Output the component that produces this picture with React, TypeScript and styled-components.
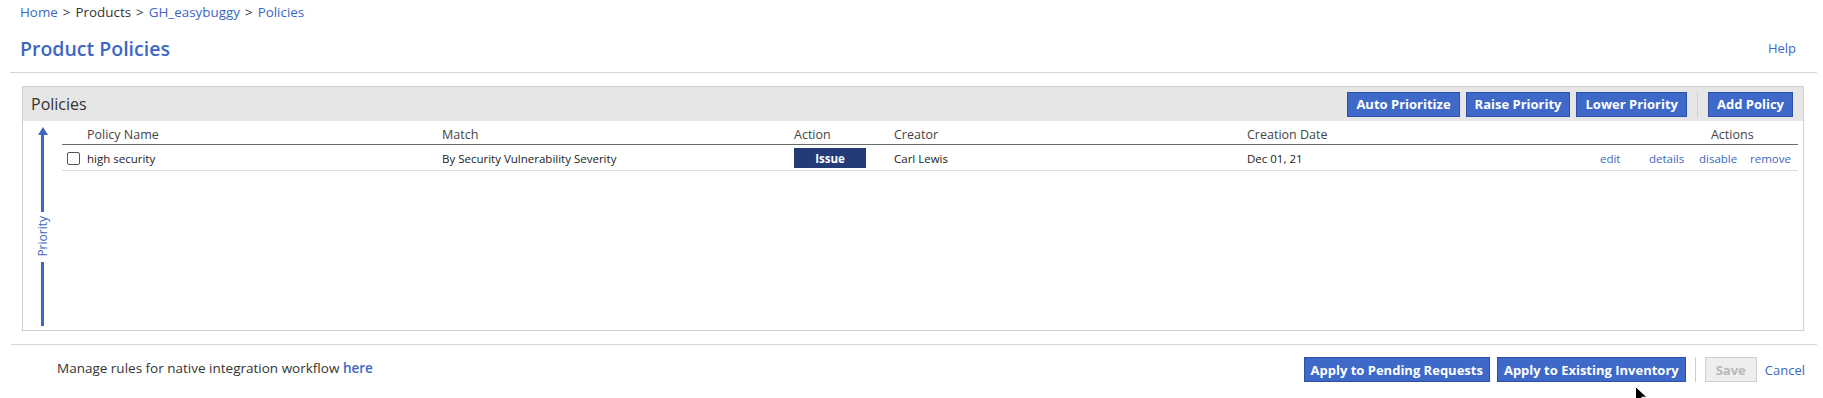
import React from "react";
import styled, { createGlobalStyle } from "styled-components";

const GlobalStyle = createGlobalStyle`
    body {
        margin: 0;
        background: #fff;
        font-family: "Open Sans", "Noto Sans", sans-serif;
        color: #333;
    }
    * { box-sizing: border-box; }
`;

const BLUE = "#3d67c4";

const Page = styled.div`
    position: relative;
    width: 1823px;
    height: 398px;
    padding: 0 6px 0 10px;
    overflow: hidden;
`;

const Breadcrumb = styled.div`
    height: 24px;
    line-height: 25px;
    padding-left: 10px;
    font-size: 13.4px;
    color: #333;
`;

const Crumb = styled.a<{ $current?: boolean }>`
    color: ${(p) => (p.$current ? "#333" : BLUE)};
    text-decoration: none;
`;

const Sep = styled.span`
    margin: 0 5px;
    color: #333;
`;

const TitleBar = styled.div`
    height: 49px;
    display: flex;
    align-items: center;
    justify-content: space-between;
    padding: 0 21px 0 10px;
    border-bottom: 1px solid #d6d6d6;
`;

const Title = styled.h1`
    margin: 0;
    font-size: 19.5px;
    font-weight: 600;
    color: ${BLUE};
`;

const HelpLink = styled.a`
    font-size: 13px;
    color: ${BLUE};
    text-decoration: none;
`;

const Panel = styled.section`
    margin: 13px 13px 0 12px;
    border: 1px solid #cfcfcf;
`;

const PanelHeader = styled.div`
    height: 34px;
    display: flex;
    align-items: center;
    padding: 0 10px 0 8px;
    background: #e6e6e6;
`;

const PanelTitle = styled.h2`
    margin: 0;
    flex: 1;
    font-size: 16px;
    font-weight: 400;
    color: #333;
`;

const ButtonGroup = styled.div`
    display: flex;
    align-items: center;
    gap: 6px;
`;

const Button = styled.button<{ $disabled?: boolean; $pad?: number }>`
    height: 25px;
    padding: 0 ${(p) => p.$pad ?? 8}px;
    font-family: "Open Sans", sans-serif;
    font-size: 13px;
    font-weight: 700;
    border: 1px solid ${(p) => (p.$disabled ? "#cfcfcf" : "#2b50a6")};
    background: ${(p) => (p.$disabled ? "#eeeeee" : "#3e69c9")};
    color: ${(p) => (p.$disabled ? "#b8b8b8" : "#fff")};
    border-radius: 0;
    cursor: pointer;
`;

const Divider = styled.span<{ $space?: number }>`
    width: 1px;
    height: 25px;
    margin: 0 ${(p) => p.$space ?? 4}px;
    background: #cfcfcf;
`;

const PanelBody = styled.div`
    height: 209px;
    display: flex;
`;

const PriorityCol = styled.div`
    width: 39px;
    display: flex;
    flex-direction: column;
    align-items: center;
    padding: 6px 0 4px;
    color: ${BLUE};
`;

const ArrowHead = styled.span`
    width: 0;
    height: 0;
    border-left: 5px solid transparent;
    border-right: 5px solid transparent;
    border-bottom: 8px solid ${BLUE};
`;

const PriorityLine = styled.span<{ $grow?: boolean }>`
    width: 3px;
    background: ${BLUE};
    ${(p) => (p.$grow ? "flex: 1;" : "height: 77px;")}
`;

const PriorityLabel = styled.span`
    writing-mode: vertical-rl;
    transform: rotate(180deg);
    font-size: 12px;
    margin: 4px 0 5px;
    line-height: 14px;
`;

const TableWrap = styled.div`
    flex: 1;
    margin-right: 5px;
`;

const Table = styled.table`
    width: 100%;
    table-layout: fixed;
    border-collapse: collapse;
    font-family: "Open Sans", sans-serif;
`;

const Th = styled.th<{ $pad?: number }>`
    height: 23px;
    padding: 4px 0 0 ${(p) => p.$pad ?? 2}px;
    text-align: left;
    font-size: 12.5px;
    font-weight: 400;
    color: #444;
    border-bottom: 1px solid #6a6a6a;
`;

const Td = styled.td<{ $pad?: number }>`
    height: 26px;
    padding: 2px 0 0 ${(p) => p.$pad ?? 2}px;
    font-size: 11.5px;
    color: #222;
    border-bottom: 1px solid #dcdcdc;
    white-space: nowrap;
`;

const CheckBox = styled.input.attrs({ type: "checkbox" })`
    appearance: none;
    display: block;
    width: 13px;
    height: 13px;
    margin: 0;
    border: 1px solid #555;
    border-radius: 2px;
    background: #fff;
`;

const ActionBadge = styled.span`
    display: flex;
    align-items: center;
    justify-content: center;
    width: 72px;
    height: 20px;
    background: #233b77;
    color: #fff;
    font-size: 11.5px;
    font-weight: 700;
`;

const RowLink = styled.a`
    color: ${BLUE};
    text-decoration: none;
`;

const Footer = styled.footer`
    margin: 13px 0 0 1px;
    border-top: 1px solid #d6d6d6;
    display: flex;
    align-items: center;
    padding: 12px 12px 0 46px;
`;

const FooterText = styled.p`
    flex: 1;
    margin: 0 0 4px;
    font-size: 13.5px;
    color: #333;
`;

const FooterLink = styled.a`
    color: ${BLUE};
    font-weight: 600;
    text-decoration: none;
`;

const FooterActions = styled.div`
    display: flex;
    align-items: center;
    gap: 7px;
`;

const CancelLink = styled.a`
    margin-left: 1px;
    font-size: 13px;
    color: ${BLUE};
    text-decoration: none;
`;

const Cursor = styled.svg`
    position: absolute;
    left: 1635px;
    top: 386px;
`;

const policies = [
    {
        name: "high security",
        match: "By Security Vulnerability Severity",
        action: "Issue",
        creator: "Carl Lewis",
        date: "Dec 01, 21",
    },
];

export default function App() {
    return (
        <Page>
            <GlobalStyle />
            <Breadcrumb>
                <Crumb>Home</Crumb>
                <Sep>&gt;</Sep>
                <Crumb $current>Products</Crumb>
                <Sep>&gt;</Sep>
                <Crumb>GH_easybuggy</Crumb>
                <Sep>&gt;</Sep>
                <Crumb>Policies</Crumb>
            </Breadcrumb>
            <TitleBar>
                <Title>Product Policies</Title>
                <HelpLink>Help</HelpLink>
            </TitleBar>

            <Panel>
                <PanelHeader>
                    <PanelTitle>Policies</PanelTitle>
                    <ButtonGroup>
                        <Button>Auto Prioritize</Button>
                        <Button>Raise Priority</Button>
                        <Button>Lower Priority</Button>
                        <Divider />
                        <Button>Add Policy</Button>
                    </ButtonGroup>
                </PanelHeader>
                <PanelBody>
                    <PriorityCol>
                        <ArrowHead />
                        <PriorityLine />
                        <PriorityLabel>Priority</PriorityLabel>
                        <PriorityLine $grow />
                    </PriorityCol>
                    <TableWrap>
                        <Table>
                            <colgroup>
                                <col style={{ width: 23 }} />
                                <col style={{ width: 355 }} />
                                <col style={{ width: 354 }} />
                                <col style={{ width: 100 }} />
                                <col style={{ width: 353 }} />
                                <col />
                                <col style={{ width: 50 }} />
                                <col style={{ width: 50 }} />
                                <col style={{ width: 50 }} />
                                <col style={{ width: 51 }} />
                            </colgroup>
                            <thead>
                                <tr>
                                    <Th />
                                    <Th>Policy Name</Th>
                                    <Th>Match</Th>
                                    <Th $pad={0}>Action</Th>
                                    <Th $pad={0}>Creator</Th>
                                    <Th $pad={0}>Creation Date</Th>
                                    <Th colSpan={4} $pad={114}>Actions</Th>
                                </tr>
                            </thead>
                            <tbody>
                                {policies.map((p) => (
                                    <tr key={p.name}>
                                        <Td $pad={5}>
                                            <CheckBox />
                                        </Td>
                                        <Td>{p.name}</Td>
                                        <Td>{p.match}</Td>
                                        <Td $pad={0}>
                                            <ActionBadge>{p.action}</ActionBadge>
                                        </Td>
                                        <Td $pad={0}>{p.creator}</Td>
                                        <Td $pad={0}>{p.date}</Td>
                                        <Td $pad={3}><RowLink>edit</RowLink></Td>
                                        <Td $pad={2}><RowLink>details</RowLink></Td>
                                        <Td $pad={2}><RowLink>disable</RowLink></Td>
                                        <Td $pad={3}><RowLink>remove</RowLink></Td>
                                    </tr>
                                ))}
                            </tbody>
                        </Table>
                    </TableWrap>
                </PanelBody>
            </Panel>

            <Footer>
                <FooterText>
                    Manage rules for native integration workflow <FooterLink>here</FooterLink>
                </FooterText>
                <FooterActions>
                    <Button $pad={6}>Apply to Pending Requests</Button>
                    <Button $pad={6}>Apply to Existing Inventory</Button>
                    <Divider $space={2} />
                    <Button $disabled $pad={10}>Save</Button>
                    <CancelLink>Cancel</CancelLink>
                </FooterActions>
            </Footer>

            <Cursor width="14" height="14" viewBox="0 0 14 14">
                <path d="M0.5 0.5 L0.5 16 L4.5 12 L7.5 18 L9.5 17 L6.8 11.2 L12 11.2 Z" fill="#000" stroke="#fff" strokeWidth="1" />
            </Cursor>
        </Page>
    );
}
